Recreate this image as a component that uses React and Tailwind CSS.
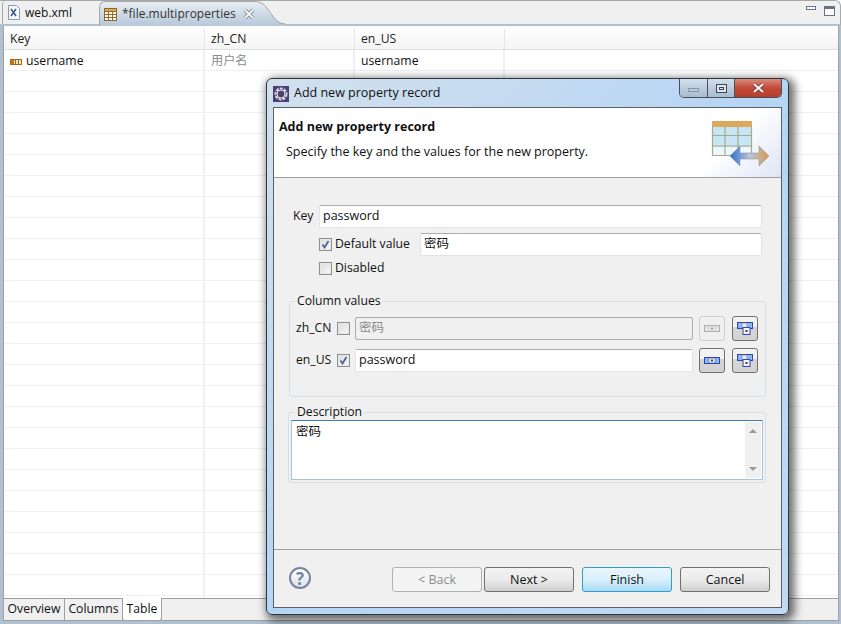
const font = { fontFamily: '"Open Sans", "Noto Sans CJK SC", sans-serif' };

function XmlIcon() {
  return (
    <svg width="12" height="15" viewBox="0 0 12 15">
      <path d="M.5.5h8l3 3v11H.5z" fill="#f4f7fb" stroke="#8a9ab0" />
      <path d="M3 4l5 7M8 4l-5 7" stroke="#3c5a8c" strokeWidth="1.6" />
    </svg>
  );
}

function TableIcon() {
  return (
    <svg width="13" height="13" viewBox="0 0 13 13">
      <rect x=".5" y=".5" width="12" height="12" fill="#fff8e4" stroke="#8a6a30" />
      <rect x="1" y="1" width="11" height="2" fill="#d9a850" />
      <path d="M.5 3.5h12M.5 6.5h12M.5 9.5h12M4.5 3v9M8.5 3v9" stroke="#8a6a30" />
    </svg>
  );
}

function TabClose() {
  return (
    <svg width="12" height="12" viewBox="0 0 12 12">
      <path d="M2 2l8 8M10 2l-8 8" stroke="#7c8288" strokeWidth="3.800" />
      <path d="M2 2l8 8M10 2l-8 8" stroke="#f6f8fa" strokeWidth="2" />
    </svg>
  );
}

// the long s-curve on the right of the active editor tab
function TabCurve() {
  return (
    <svg width="32" height="25" viewBox="0 0 32 25" className="-ml-px block shrink-0">
      <defs>
        <linearGradient id="tabfill" x1="0" x2="0" y1="0" y2="1">
          <stop offset="0" stopColor="#e8eef4" />
          <stop offset="1" stopColor="#b6c7d8" />
        </linearGradient>
      </defs>
      <path d="M0 0.500C11 0.500 13 8 18 14C22 20 26 23 32 23V25H0z" fill="url(#tabfill)" />
      <path d="M0 0.500C11 0.500 13 8 18 14C22 20 26 23 32 23" fill="none" stroke="#a0a4a8" />
    </svg>
  );
}

function RecordIcon() {
  return (
    <svg width="12" height="6" viewBox="0 0 12 6">
      <rect x=".5" y=".5" width="11" height="5" fill="#f2e2b8" stroke="#9a6a20" />
      <rect x="1" y="1" width="3" height="4" fill="#c8741c" />
      <path d="M5.5 1v4M8.5 1v4" stroke="#9a6a20" />
    </svg>
  );
}

function WizardBanner() {
  return (
    <svg width="60" height="52" viewBox="0 0 60 52">
      <rect x="2" y="6" width="40" height="6" fill="#dca95c" />
      <rect x="2" y="12" width="40" height="29" fill="#c6e6f5" />
      <rect x="2" y="32" width="40" height="9" fill="#eef7fb" />
      <path d="M2.500 12v29M15 12v29M28 12v29M41.500 12v29M2 20.500h40M2 31h40M2 40.500h40" stroke="#a9a98c" strokeWidth="1.2" />
      <defs>
        <linearGradient id="arrow" x1="0" x2="1" y1="0" y2="0">
          <stop offset="0" stopColor="#2a6fd0" />
          <stop offset=".5" stopColor="#b8c4d8" />
          <stop offset="1" stopColor="#d89a50" />
        </linearGradient>
      </defs>
      <path d="M20 41l10-10v7h19v-7l10 10-10 10v-7H30v7z" fill="url(#arrow)" stroke="#8a8a90" strokeWidth=".5" />
    </svg>
  );
}

function GearIcon() {
  return (
    <svg width="16" height="16" viewBox="0 0 16 16">
      <rect width="16" height="16" fill="#4b3f78" />
      <circle cx="8" cy="8" r="5.500" fill="#30284e" stroke="#d8d8e0" strokeWidth="2" strokeDasharray="3 1" />
      <circle cx="8" cy="8" r="4" fill="#4b4468" stroke="#eceaf2" />
    </svg>
  );
}

function Check({ checked }) {
  return (
    <span className="flex h-[13px] w-[13px] shrink-0 items-center justify-center border border-[#8e8f8f] bg-gradient-to-br from-[#dcdcdc] to-[#f8f8f8] outline outline-1 -outline-offset-2 outline-[#e8e8e8]">
      {checked && (
        <svg width="9" height="9" viewBox="0 0 9 9">
          <path d="M1.500 4.500l2 3L7.500 1" fill="none" stroke="#4a5f97" strokeWidth="1.700" />
        </svg>
      )}
    </span>
  );
}

function Input({ value, className, disabled }) {
  return (
    <div
      className={`flex h-[23px] items-center rounded-[2px] border px-[3px] text-[12.500px] ${
        disabled
          ? "border-[#acacac] bg-[#f0f0f0] text-[#8c8c8c]"
          : "border-[#e2e3ea] border-t-[#abadb3] bg-white text-[#111]"
      } ${className}`}
    >
      {value}
    </div>
  );
}

function SingleGlyph({ disabled }) {
  const fill = disabled ? "#e4e4e4" : "#8db8f0";
  const line = disabled ? "#b0b0b0" : "#2a48b0";
  return (
    <svg width="16" height="7" viewBox="0 0 16 7">
      <rect x=".5" y=".5" width="15" height="6" fill={fill} stroke={line} />
      <rect x="5" y="1" width="6" height="5" fill="#f0f0f0" stroke={line} strokeWidth=".5" />
      <rect x="7" y="2.500" width="2" height="2" fill={disabled ? "#999" : "#5a3040"} />
    </svg>
  );
}

function CopyGlyph() {
  return (
    <svg width="16" height="13" viewBox="0 0 16 13">
      <rect x=".5" y=".5" width="15" height="6" fill="#8db8f0" stroke="#2a48b0" />
      <rect x="5" y="1" width="5" height="5" fill="#e8e8e8" stroke="#806070" strokeWidth=".5" />
      <rect x="6" y="5.500" width="7" height="7" fill="#f4f4f4" stroke="#2a48b0" />
      <rect x="8.500" y="8" width="2" height="2" fill="#5a3040" />
    </svg>
  );
}

function IconButton({ disabled, children, className }) {
  return (
    <div
      className={`flex h-[25px] w-[26px] items-center justify-center rounded-[3px] border ${
        disabled
          ? "border-[#d0d0d0] bg-[#f0f0f0]"
          : "border-[#707070] bg-gradient-to-b from-[#f2f2f2] from-45% to-[#d4d4d4] to-45%"
      } ${className || ""}`}
    >
      {children}
    </div>
  );
}

function DialogButton({ label, disabled, primary }) {
  let tone = "border-[#707070] from-[#f3f3f3] via-[#ebebeb] to-[#cfcfcf] text-[#111]";
  if (disabled) tone = "border-[#adb2b5] from-[#f4f4f4] via-[#f4f4f4] to-[#f4f4f4] text-[#8c8c8c]";
  if (primary) tone = "border-[#2f9fc8] from-[#eaf6fd] via-[#d9f0fc] to-[#a7d9f5] text-[#111]";
  return (
    <div className={`flex h-[25px] w-[90px] items-center justify-center rounded-[3px] border bg-gradient-to-b pt-px text-[12.500px] ${tone}`}>
      {label}
    </div>
  );
}

function Group({ title, className, legendClass, children }) {
  return (
    <fieldset className={`rounded-[3px] border border-[#d5dfe5] ${className}`}>
      <legend className={`px-[2px] text-[12.200px] leading-[12px] text-[#111] ${legendClass}`}>{title}</legend>
      {children}
    </fieldset>
  );
}

function ValueRow({ locale, checked, value, disabled }) {
  return (
    <div className="flex items-center">
      <span className="w-[41px] text-[12.200px] text-[#111]">{locale}</span>
      <Check checked={checked} />
      <Input value={value} disabled={disabled} className="ml-[5px] w-[338px]" />
      <IconButton disabled={disabled} className="ml-[6px]">
        <SingleGlyph disabled={disabled} />
      </IconButton>
      <IconButton className="ml-[7px]">
        <CopyGlyph />
      </IconButton>
    </div>
  );
}

function WindowButtons() {
  return (
    <div className="flex h-[19px] overflow-hidden rounded-b-[5px] border border-t-0 border-[#4a5058]">
      <div className="flex w-[28px] items-center justify-center border-r border-[#4a5058] bg-gradient-to-b from-[#d2dfec] to-[#a8bbd0]">
        <span className="mt-[4px] h-[4px] w-[11px] border border-[#8a97a8] bg-[#c0cad6]" />
      </div>
      <div className="flex w-[27px] items-center justify-center border-r border-[#4a5058] bg-gradient-to-b from-[#d2dfec] to-[#a8bbd0]">
        <span className="flex h-[9px] w-[11px] items-center justify-center border border-[#3c4654] bg-[#dfe6ee]">
          <span className="h-[3px] w-[5px] border border-[#3c4654]" />
        </span>
      </div>
      <div className="flex w-[46px] items-center justify-center bg-gradient-to-b from-[#d8897c] via-[#c24a38] to-[#b53e2c]">
        <svg width="13" height="10" viewBox="0 0 13 10">
          <path d="M2 1l9 8M11 1l-9 8" stroke="#6a3a34" strokeWidth="3.600" />
          <path d="M2 1l9 8M11 1l-9 8" stroke="#f4f2f0" strokeWidth="2.200" />
        </svg>
      </div>
    </div>
  );
}

function Dialog() {
  return (
    <div className="absolute top-[78px] left-[266px] flex h-[537px] w-[523px] flex-col rounded-[6px] border border-[#30363c] bg-gradient-to-br from-[#d2e0ec] via-[#b5d5f5] to-[#c0daf3] px-[6px] pb-[6px] shadow-[3px_3px_9px_3px_rgba(0,0,0,0.55)]">
      <div className="flex h-[28px] shrink-0 items-start justify-between">
        <div className="flex items-center gap-[5px] pt-[6px] text-[12.500px] text-[#111]">
          <GearIcon />
          <span className="-mt-px">Add new property record</span>
        </div>
        <WindowButtons />
      </div>

      <div className="flex min-h-0 flex-1 flex-col border border-[#5a6068] bg-[#f0f0f0]">
        <div className="relative h-[70px] shrink-0 border-b border-[#9f9f9f] bg-white">
          <div className="absolute inset-y-0 right-0 w-[90px] bg-[linear-gradient(135deg,#ffffff_45%,#dfe5f5_100%)]" />
          <div className="relative flex justify-between">
            <div className="pt-[10px] pl-[5px]">
              <div className="text-[12.500px] leading-[18px] font-bold text-[#111]">Add new property record</div>
              <div className="mt-[7px] pl-[7px] text-[12.500px] leading-[18px] text-[#111]">Specify the key and the values for the new property.</div>
            </div>
            <div className="pt-[7px] pr-[11px]">
              <WizardBanner />
            </div>
          </div>
        </div>

        <div className="flex min-h-0 flex-1 flex-col border-b border-[#9f9f9f] pt-[27px] pr-[19px] pl-[14px]">
          <div className="flex items-center pl-[5px]">
            <span className="w-[26px] text-[12.200px] text-[#111]">Key</span>
            <Input value="password" className="flex-1" />
          </div>
          <div className="mt-[5px] flex items-center pl-[31px]">
            <Check checked />
            <span className="ml-[3px] w-[85px] text-[12.200px] text-[#111]">Default value</span>
            <Input value="密码" className="flex-1" />
          </div>
          <div className="mt-[6px] flex h-[13px] items-center pl-[31px]">
            <Check />
            <span className="ml-[3px] text-[12.200px] text-[#111]">Disabled</span>
          </div>

          <Group title="Column values" legendClass="-ml-px" className="mt-[20px] -mr-[4px] ml-px h-[102px] pt-[9px] pl-[6px]">
            <div className="flex flex-col gap-[7px]">
              <ValueRow locale="zh_CN" value="密码" disabled />
              <ValueRow locale="en_US" value="password" checked />
            </div>
          </Group>

          <Group title="Description" legendClass="ml-[4px]" className="mt-[9px] -mr-[4px] h-[77px] pt-[2px] pr-[2px] pl-[2px]">
            <div className="flex h-[60px] border border-[#a8c4dc] border-t-[#3f7fb5] bg-white">
              <div className="flex-1 pt-[2px] pl-[4px] text-[12.500px] leading-[18px] text-[#111]">密码</div>
              <div className="m-[1px] flex w-[16px] flex-col items-center justify-between bg-[#f0f0f0] py-[7px]">
                <span className="h-0 w-0 border-x-[4px] border-b-[4px] border-x-transparent border-b-[#9a9a9a]" />
                <span className="h-0 w-0 border-x-[4px] border-t-[4px] border-x-transparent border-t-[#9a9a9a]" />
              </div>
            </div>
          </Group>
        </div>

        <div className="flex h-[57px] shrink-0 items-start justify-between pt-[17px] pr-[11px] pl-[15px]">
          <div className="flex h-[22px] w-[22px] items-center justify-center rounded-full border-2 border-[#76859f] bg-gradient-to-b from-white to-[#dfe3ea] text-[17px] leading-none font-bold text-[#76859f]">?</div>
          <div className="flex">
            <DialogButton label="< Back" disabled />
            <div className="ml-[2px]">
              <DialogButton label="Next >" />
            </div>
            <div className="ml-[8px]">
              <DialogButton label="Finish" primary />
            </div>
            <div className="ml-[8px]">
              <DialogButton label="Cancel" />
            </div>
          </div>
        </div>
      </div>
    </div>
  );
}

const rows = Array.from({ length: 26 });

export default function App() {
  return (
    <div style={font} className="relative flex h-[624px] w-[841px] flex-col overflow-hidden bg-white text-[12.200px]">
      <div className="flex h-[26px] shrink-0 items-start justify-between rounded-tr-[6px] border-t border-r border-[#a8a8a8] border-b-[2px] border-b-[#b0c0d0] bg-[#f0f0f0] pl-[2px] text-[12px]">
        <div className="flex h-[25px] items-start">
          <div className="flex h-[23px] w-[97px] items-center gap-[5px] rounded-tl-[4px] border-l border-[#a8a8a8] pl-[5px] text-[#111]">
            <XmlIcon />
            web.xml
          </div>
          <div className="flex h-[25px] w-[156px] items-center gap-[5px] rounded-tl-[6px] border-t border-l border-[#a8a8a8] bg-gradient-to-b from-[#e8eef4] to-[#b6c7d8] pl-[4px] text-[#333]">
            <TableIcon />
            <span>*file.multiproperties</span>
            <span className="ml-[2px]">
              <TabClose />
            </span>
          </div>
          <TabCurve />
        </div>
        <div className="mt-[5px] mr-[5px] flex items-start gap-[8px]">
          <span className="h-[4px] w-[10px] border border-[#6a7480] bg-white" />
          <span className="h-[10px] w-[11px] border border-t-[3px] border-[#6a7480] bg-white" />
        </div>
      </div>

      <div className="flex min-h-0 flex-1 flex-col border-r-[2px] border-b-[3px] border-l-[3px] border-[#b0c0d0] bg-white">
        <div className="flex min-h-0 flex-1 flex-col border-x border-b border-[#a0a0a0]">
          <div className="min-h-0 flex-1 overflow-hidden">
            <div className="flex h-[24px] border-b border-[#e0e0e0] bg-gradient-to-b from-white to-[#f4f4f4] pt-[3px] text-[#222]">
              <div className="flex w-[201px] items-center border-r border-[#e4e6ea] pl-[6px]">Key</div>
              <div className="flex w-[150px] items-center border-r border-[#e4e6ea] pl-[6px]">zh_CN</div>
              <div className="flex w-[150px] items-center border-r border-[#e4e6ea] pl-[6px]">en_US</div>
            </div>
            <div className="flex h-[21px] border-b border-[#eef0f3]">
              <div className="flex w-[201px] items-center gap-[4px] border-r-2 border-[#eef0f3] pt-[3px] pl-[6px] text-[#111]">
                <RecordIcon />
                username
              </div>
              <div className="flex w-[150px] items-center border-r-2 border-[#eef0f3] pt-[3px] pl-[6px] text-[#8c8c8c]">用户名</div>
              <div className="flex w-[150px] items-center border-r-2 border-[#eef0f3] pt-[3px] pl-[6px] text-[#111]">username</div>
            </div>
            {rows.map((_, i) => (
              <div key={i} className="flex h-[21px] border-b border-[#eef0f3]">
                <div className="w-[201px] border-r-2 border-[#eef0f3]" />
                <div className="w-[150px] border-r-2 border-[#eef0f3]" />
                <div className="w-[150px] border-r-2 border-[#eef0f3]" />
              </div>
            ))}
          </div>
          <div className="flex h-[22px] shrink-0 border-t border-[#a0a0a0] bg-[#f0f0f0] text-[#111]">
            <div className="flex w-[61px] items-center justify-center border-r border-[#a0a0a0]">Overview</div>
            <div className="flex w-[58px] items-center justify-center border-r border-[#a0a0a0]">Columns</div>
            <div className="-mt-px flex h-[23px] w-[39px] items-center justify-center rounded-b-[3px] border-r border-b border-[#a0a0a0] bg-white">Table</div>
          </div>
        </div>
      </div>

      <Dialog />
    </div>
  );
}
